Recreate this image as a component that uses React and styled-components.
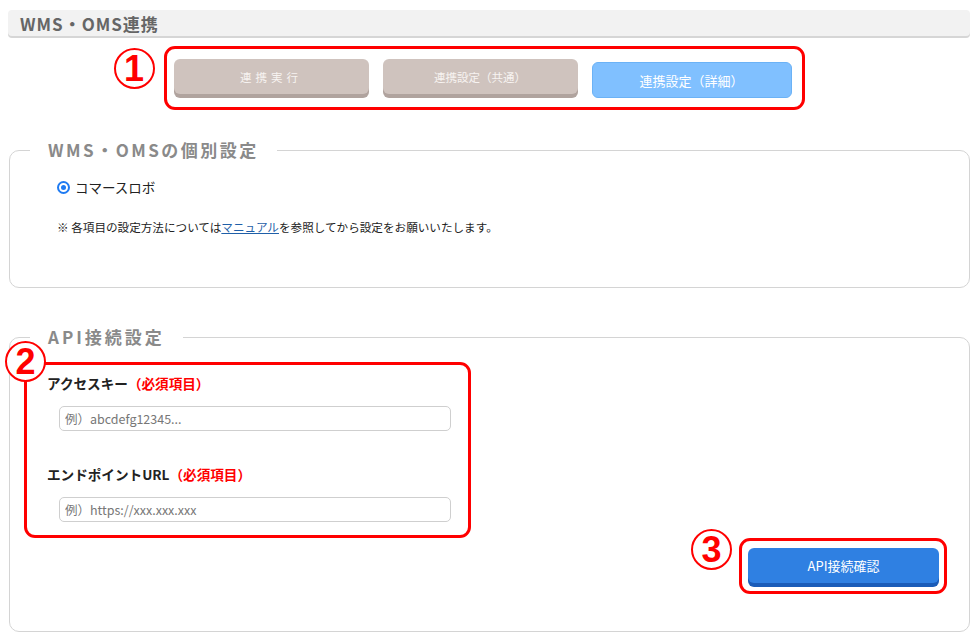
import React from "react";
import styled, { createGlobalStyle } from "styled-components";

const GlobalStyle = createGlobalStyle`
  body {
    margin: 0;
    background: #fff;
    font-family: "Noto Sans CJK JP", "Noto Sans", sans-serif;
    color: #222;
  }
`;

const Page = styled.div`
  width: 980px;
  height: 640px;
  box-sizing: border-box;
  padding: 10px 10px 0 8px;
  overflow: hidden;
`;

const Header = styled.div`
  height: 26px;
  display: flex;
  align-items: center;
  padding-left: 12px;
  background: #f2f2f2;
  border-radius: 4px;
  box-shadow: 0 2px 0 #d6d6d6;
  font-size: 17px;
  letter-spacing: 1px;
  font-weight: 700;
  color: #666;
`;

const TabRow = styled.div`
  display: flex;
  justify-content: center;
  margin: 10px 0 0 -10px;
`;

const Callout = styled.div`
  position: relative;
  display: flex;
  align-items: ${(p) => p.$align || "flex-start"};
  gap: ${(p) => p.$gap || 0}px;
  flex-direction: ${(p) => (p.$column ? "column" : "row")};
  border: 3px solid #ff0000;
  border-radius: 11px;
  padding: ${(p) => p.$pad};
  box-sizing: border-box;
  width: ${(p) => (p.$width ? p.$width + "px" : "auto")};
  margin: ${(p) => p.$mt || 0}px 0 0 ${(p) => p.$ml || 0}px;
  background: #fff;
`;

const Marker = styled.span`
  position: absolute;
  left: ${(p) => p.$left}px;
  top: ${(p) => p.$top}px;
  width: 41px;
  height: 41px;
  box-sizing: border-box;
  border: 2.5px solid #ff0000;
  border-radius: 50%;
  background: #fff;
  color: #ff0000;
  display: flex;
  align-items: center;
  justify-content: center;
  font-family: "Liberation Sans", Arial, sans-serif;
  font-size: 36px;
  font-weight: 700;
  line-height: 1;
  z-index: 2;
`;

const TabButton = styled.div`
  width: ${(p) => p.$w}px;
  height: ${(p) => (p.$active ? 36 : 35)}px;
  margin-top: ${(p) => (p.$active ? 3 : 0)}px;
  box-sizing: border-box;
  display: flex;
  align-items: center;
  justify-content: center;
  border-radius: 6px;
  background: ${(p) => (p.$active ? "#80c0ff" : "#cfc3be")};
  border: ${(p) => (p.$active ? "1px solid #6bb2f6" : "none")};
  box-shadow: ${(p) => (p.$active ? "none" : "0 4px 0 #b0a39e")};
  color: ${(p) => (p.$active ? "#fff" : "#f7f3f1")};
  font-size: ${(p) => (p.$active ? 13 : 11.5)}px;
  letter-spacing: ${(p) => p.$spacing || 0}px;
`;

const Fieldset = styled.fieldset`
  margin: ${(p) => p.$mt}px 0 0 1px;
  padding: 0 20px ${(p) => p.$pb}px;
  border: 1px solid #d4d4d4;
  border-radius: 10px;
  min-inline-size: 0;
`;

const Legend = styled.legend`
  padding: 0 18px;
  font-size: 17px;
  line-height: 20px;
  font-weight: 700;
  color: #8a8a8a;
  letter-spacing: ${(p) => p.$spacing}px;
`;

const RadioRow = styled.label`
  display: flex;
  align-items: center;
  gap: 5px;
  margin: 17px 0 0 27px;
  font-size: 13.5px;
  line-height: 20px;
  color: #222;
`;

const RadioDot = styled.span`
  width: 13px;
  height: 13px;
  box-sizing: border-box;
  border-radius: 50%;
  border: 2px solid #1f7bf2;
  display: flex;
  align-items: center;
  justify-content: center;

  &::after {
    content: "";
    width: 5px;
    height: 5px;
    border-radius: 50%;
    background: #1f7bf2;
  }
`;

const Note = styled.p`
  margin: 22px 0 0 27px;
  font-size: 11.6px;
  line-height: 16px;
  color: #222;
`;

const ManualLink = styled.a`
  color: #1f5fa8;
  text-decoration: underline;
`;

const FieldLabel = styled.div`
  font-size: 13.6px;
  line-height: 20px;
  font-weight: 700;
  color: #222;
  margin-top: ${(p) => p.$mt || 0}px;
`;

const Required = styled.span`
  color: #ff0000;
`;

const Input = styled.input`
  display: block;
  width: calc(100% - 12px);
  margin: 13px 0 0 12px;
  height: 25px;
  box-sizing: border-box;
  border: 1px solid #cfcfcf;
  border-radius: 5px;
  padding: 0 5px;
  font-family: "Noto Sans CJK JP", "Noto Sans", sans-serif;
  font-size: 12.5px;
  color: #333;

  &::placeholder {
    color: #777;
  }
`;

const ButtonRow = styled.div`
  display: flex;
  justify-content: flex-end;
  padding-right: 2px;
`;

const PrimaryButton = styled.button`
  width: 191px;
  height: 35px;
  border: none;
  border-radius: 6px;
  background: #2f80e2;
  box-shadow: 0 4px 0 #1a5cb8;
  color: #fff;
  font-family: "Noto Sans CJK JP", "Noto Sans", sans-serif;
  font-size: 13px;
  cursor: pointer;
`;

const App = () => {
  return (
    <Page>
      <GlobalStyle />
      <Header>WMS・OMS連携</Header>

      <TabRow>
        <Callout $pad="10px 10px 9px 7px" $gap={14}>
          <Marker $left={-53} $top={-1}>1</Marker>
          <TabButton $w={195} $spacing={4}>連携実行</TabButton>
          <TabButton $w={195}>連携設定（共通）</TabButton>
          <TabButton $w={200} $active>連携設定（詳細）</TabButton>
        </Callout>
      </TabRow>

      <Fieldset $mt={30} $pb={52}>
        <Legend $spacing={2.5}>WMS・OMSの個別設定</Legend>
        <RadioRow>
          <RadioDot />
          コマースロボ
        </RadioRow>
        <Note>
          ※ 各項目の設定方法については<ManualLink href="#">マニュアル</ManualLink>を参照してから設定をお願いいたします。
        </Note>
      </Fieldset>

      <Fieldset $mt={39} $pb={37}>
        <Legend $spacing={3}>API接続設定</Legend>
        <Callout $column $align="stretch" $pad="8px 17px 13px 20px" $width={447} $ml={-6} $mt={15}>
          <Marker $left={-22} $top={-24}>2</Marker>
          <FieldLabel>
            アクセスキー<Required>（必須項目）</Required>
          </FieldLabel>
          <Input placeholder="例）abcdefg12345..." />
          <FieldLabel $mt={33}>
            エンドポイントURL<Required>（必須項目）</Required>
          </FieldLabel>
          <Input placeholder="例）https://xxx.xxx.xxx" />
        </Callout>
        <ButtonRow>
          <Callout $pad="7px 5px 8px 6px">
            <Marker $left={-51} $top={-12}>3</Marker>
            <PrimaryButton>API接続確認</PrimaryButton>
          </Callout>
        </ButtonRow>
      </Fieldset>
    </Page>
  );
};

export default App;
